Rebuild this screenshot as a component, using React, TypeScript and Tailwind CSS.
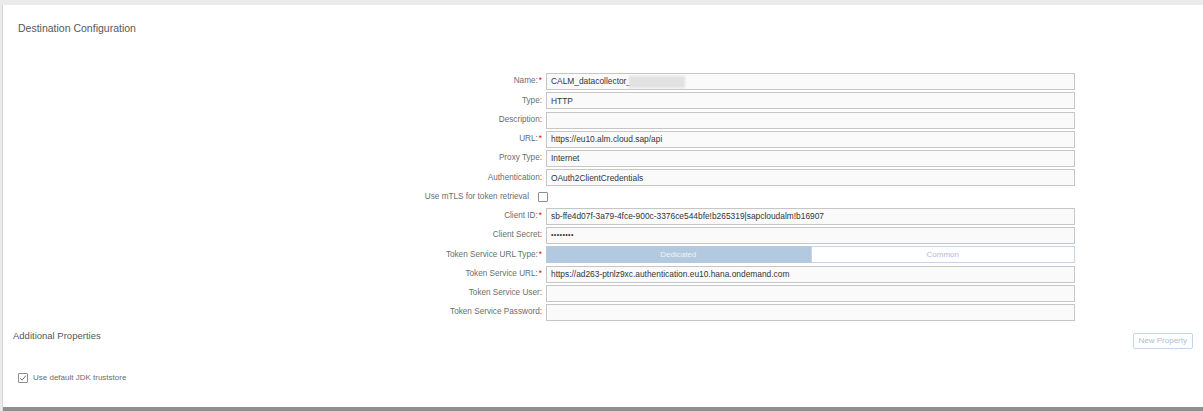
import React from "react";

const font = { fontFamily: '"Liberation Sans", Arial, sans-serif' };

type Row = { label: string; value?: string; required?: boolean; kind?: "input" | "secret" | "name" | "segment" | "check" };

const rows: Row[] = [
  { label: "Name:", value: "CALM_datacollector_", required: true, kind: "name" },
  { label: "Type:", value: "HTTP" },
  { label: "Description:", value: "" },
  { label: "URL:", value: "https://eu10.alm.cloud.sap/api", required: true },
  { label: "Proxy Type:", value: "Internet" },
  { label: "Authentication:", value: "OAuth2ClientCredentials" },
  { label: "Use mTLS for token retrieval", kind: "check" },
  { label: "Client ID:", value: "sb-ffe4d07f-3a79-4fce-900c-3376ce544bfe!b265319|sapcloudalm!b16907", required: true },
  { label: "Client Secret:", value: "••••••••", kind: "secret" },
  { label: "Token Service URL Type:", required: true, kind: "segment" },
  { label: "Token Service URL:", value: "https://ad263-ptnlz9xc.authentication.eu10.hana.ondemand.com", required: true },
  { label: "Token Service User:", value: "" },
  { label: "Token Service Password:", value: "" },
];

const FieldRow = ({ row }: { row: Row }) => {
  if (row.kind === "check") {
    return (
      <div className="flex h-[19.25px] items-center">
        <div className="flex w-[545px] shrink-0 items-center justify-end text-[8.2px] text-[#6a6d70]">
          <span>{row.label}</span>
          <span className="ml-[9px] h-[10px] w-[10px] rounded-[1px] border border-[#8d8d8d] bg-white" />
        </div>
      </div>
    );
  }
  return (
    <div className="flex h-[19.25px] items-center">
      <div className="flex w-[539px] shrink-0 items-center justify-end text-[8.2px] text-[#6a6d70]">
        <span>{row.label}</span>
        {row.required && <span className="ml-[1px] text-[#e00000]">*</span>}
      </div>
      {row.kind === "segment" ? (
        <div className="ml-[4px] flex h-[17px] w-[529px] text-[8px]">
          <div className="flex w-1/2 items-center justify-center bg-[#b3c9e0] text-[#eef3f8]">Dedicated</div>
          <div className="flex w-1/2 items-center justify-center border border-[#c5d6ea] bg-white text-[#aebdcf]">Common</div>
        </div>
      ) : (
        <div className="ml-[4px] flex h-[17px] w-[529px] items-center border border-[#c6c6c6] bg-[#fafafa] pl-[4px] text-[8.4px] text-[#32363a]">
          <span className={row.kind === "secret" ? "text-[7px] tracking-[0.4px]" : ""}>{row.value}</span>
          {row.kind === "name" && <span className="ml-[-2px] h-[12px] w-[56px] bg-[#e2e2e2] blur-[1px]" />}
        </div>
      )}
    </div>
  );
};

export default function App() {
  return (
    <div className="flex h-[411px] w-[1203px] flex-col bg-[#ebebeb] pl-[2px] pt-[5px]" style={font}>
      <div className="flex flex-1 flex-col border-l border-[#d6d6d6] bg-white">
        <div className="pl-[15px] pt-[17px] text-[10.5px] leading-[12px] text-[#55585b]">Destination Configuration</div>
        <div className="mt-[38px] flex flex-col">
          {rows.map((r) => (
            <FieldRow key={r.label} row={r} />
          ))}
        </div>
        <div className="mt-[8px] flex items-start justify-between pl-[10px] pr-[10px]">
          <span className="text-[9.5px] leading-[12px] text-[#55585b]">Additional Properties</span>
          <button className="mt-[3px] h-[16px] rounded-[2px] border border-[#c3d5ea] px-[5px] text-[8px] text-[#a9bfd8]">
            New Property
          </button>
        </div>
        <div className="mt-[23px] flex h-[12px] items-center pl-[15px] text-[8px] text-[#6a6d70]">
          <span className="flex h-[10px] w-[10px] items-center justify-center rounded-[1px] border border-[#8d8d8d] bg-white">
            <svg width="8" height="8" viewBox="0 0 8 8" fill="none">
              <path d="M1.2 4.2 L3.1 6.1 L6.9 1.6" stroke="#6a6d70" strokeWidth="1" />
            </svg>
          </span>
          <span className="ml-[5px]">Use default JDK truststore</span>
        </div>
        <div className="flex-1" />
        <div className="h-[4px] bg-[#8f8f8f]" />
      </div>
    </div>
  );
}
